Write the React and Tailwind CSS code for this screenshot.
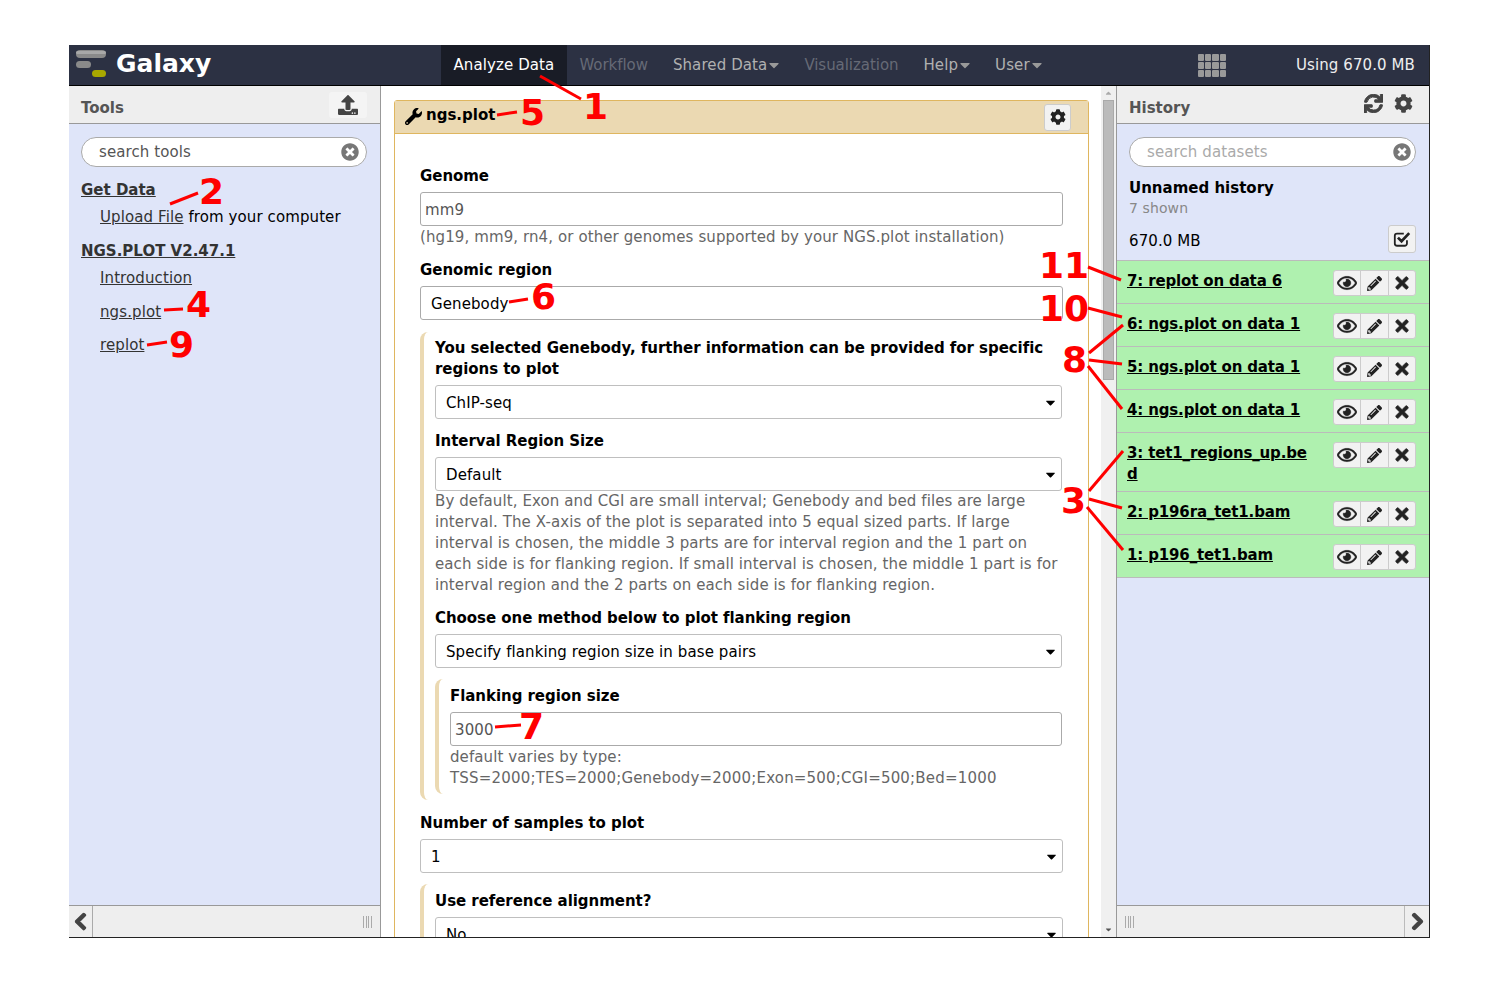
import {
  FaCaretDown,
  FaChevronLeft,
  FaChevronRight,
  FaCog,
  FaPencilAlt,
  FaRegEye,
  FaSync,
  FaTimes,
  FaTimesCircle,
  FaUpload,
  FaWrench,
} from "react-icons/fa";

const navItems = [
  { label: "Analyze Data", active: true },
  { label: "Workflow", disabled: true },
  { label: "Shared Data", caret: true },
  { label: "Visualization", disabled: true },
  { label: "Help", caret: true },
  { label: "User", caret: true },
];

const datasets = [
  { title: "7: replot on data 6" },
  { title: "6: ngs.plot on data 1" },
  { title: "5: ngs.plot on data 1" },
  { title: "4: ngs.plot on data 1" },
  { title: "3: tet1_regions_up.bed" },
  { title: "2: p196ra_tet1.bam" },
  { title: "1: p196_tet1.bam" },
];

// red callouts drawn on top of the screenshot
const callouts = [
  { n: "1", x: 583, y: 119, lines: [[540, 76, 581, 99]] },
  { n: "2", x: 199, y: 204, lines: [[170, 204, 198, 193]] },
  { n: "3", x: 1061, y: 513, lines: [[1089, 491, 1123, 451], [1089, 499, 1122, 508], [1087, 507, 1123, 550]] },
  { n: "4", x: 186, y: 317, lines: [[164, 310, 183, 309]] },
  { n: "5", x: 520, y: 125, lines: [[497, 115, 517, 112]] },
  { n: "6", x: 531, y: 309, lines: [[509, 302, 528, 299]] },
  { n: "7", x: 519, y: 739, lines: [[495, 727, 521, 725]] },
  { n: "8", x: 1062, y: 372, lines: [[1089, 353, 1123, 325], [1089, 360, 1122, 364], [1088, 366, 1122, 409]] },
  { n: "9", x: 169, y: 357, lines: [[147, 345, 167, 342]] },
  { n: "10", x: 1039, y: 321, lines: [[1088, 308, 1122, 317]] },
  { n: "11", x: 1039, y: 278, lines: [[1088, 267, 1121, 280]] },
];

const gridCells = [0, 1, 2, 3, 4, 5, 6, 7, 8, 9, 10, 11];

const Logo = () => (
  <svg width="34" height="30" viewBox="0 0 34 30" className="shrink-0">
    <rect x="1" y="0" width="30" height="8" rx="4" fill="#8a8a8a" />
    <rect x="1" y="1" width="30" height="3" rx="1.5" fill="#a8a8a8" />
    <rect x="1" y="11" width="15" height="7" rx="3.5" fill="#8a8a8a" />
    <rect x="17" y="20" width="14" height="7" rx="3.5" fill="#a8a800" />
  </svg>
);

// fa4 check-square-o, the fa5 one in react-icons is a closed box
const CheckSquare = () => (
  <svg width="18" height="18" viewBox="0 0 20 20" fill="none" stroke="#222222">
    <path d="M15.5 11.5v3.5a2.5 2.5 0 0 1-2.5 2.5H4.5A2.5 2.5 0 0 1 2 15V6.5A2.5 2.5 0 0 1 4.5 4H12" strokeWidth="2" />
    <path d="M5.5 8.5l4 4L18 3.5" strokeWidth="3" />
  </svg>
);

const Search = ({ placeholder, muted }) => (
  <div className={`flex h-[30px] items-center justify-between rounded-full border border-[#aaaaaa] bg-white pl-[17px] ${muted ? "pr-[4px]" : "pr-[7px]"}`}>
    <span className={muted ? "text-[#aaaaaa]" : "text-[#555555]"}>{placeholder}</span>
    <FaTimesCircle className="text-[18px] text-[#777777]" />
  </div>
);

const SelectBox = ({ value }) => (
  <div className="flex h-[34px] items-center justify-between rounded-[3px] border border-[#bfbfbf] bg-white pl-[10px] pr-[3px] text-black">
    <span className="translate-y-px">{value}</span>
    <FaCaretDown className="text-[15px]" />
  </div>
);

const TextBox = ({ value }) => (
  <div className="flex h-[34px] items-center rounded-[3px] border border-[#aaaaaa] bg-white pl-[4px] text-[#555555]">
    <span className="translate-y-px">{value}</span>
  </div>
);

const Label = ({ children, className = "" }) => (
  <div className={`translate-y-px font-bold tracking-[-0.05px] text-black ${className}`}>{children}</div>
);

const Help = ({ children, className = "" }) => (
  <div className={`translate-y-px text-[#666666] ${className}`}>{children}</div>
);

const Grip = () => (
  <div className="flex h-3 w-[9px] justify-between">
    <div className="w-px bg-[#aaaaaa]" />
    <div className="w-px bg-[#aaaaaa]" />
    <div className="w-px bg-[#aaaaaa]" />
    <div className="w-px bg-[#aaaaaa]" />
  </div>
);

const DatasetRow = ({ title }) => (
  <div className="flex justify-between border-t border-[#bbbbbb] bg-[#aff1af] pb-[7px] pl-[10px] pr-[13px] pt-[9px]">
    <div className="w-[189px] translate-y-px break-all font-bold leading-[21px] tracking-[-0.15px] text-black underline">{title}</div>
    <div className="flex h-[26px] w-[83px] shrink-0 rounded-[3px] border border-[#cccccc] bg-[#f2f2f2] text-[#222222]">
      <div className="flex flex-1 items-center justify-center border-r border-[#cccccc]">
        <FaRegEye className="stroke-[10px] text-[20px]" />
      </div>
      <div className="flex flex-1 items-center justify-center border-r border-[#cccccc]">
        <FaPencilAlt className="text-[15px]" />
      </div>
      <div className="flex flex-1 items-center justify-center">
        <FaTimes className="stroke-[25px] text-[18px]" />
      </div>
    </div>
  </div>
);

const Masthead = () => (
  <div className="flex h-[41px] shrink-0 items-center border-b border-black bg-[#2c3143]">
    <div className="flex w-[372px] shrink-0 items-center gap-[7px] pl-[6px]">
      <Logo />
      <span className="-mt-[3px] text-[25px] font-bold tracking-normal text-white">Galaxy</span>
    </div>
    <div className="flex h-full items-stretch">
      {navItems.map((item) => (
        <div
          key={item.label}
          className={`flex items-center px-[12.5px] ${item.active ? "bg-[#191c26] text-white" : ""} ${
            item.disabled ? "tracking-[-0.05px] text-[#666a76]" : ""
          } ${!item.active && !item.disabled ? "text-[#b0b0b0]" : ""}`}
        >
          {item.label}
          {item.caret ? <FaCaretDown className="-ml-[1px] -mr-[3px] text-[16px] text-[#999999]" /> : null}
        </div>
      ))}
    </div>
    <div className="flex flex-1 items-center justify-end">
      <div className="mr-[70px] grid grid-cols-4 gap-px">
        {gridCells.map((c) => (
          <div key={c} className="h-[7px] w-[6.25px] rounded-[1px] bg-[#999999]" />
        ))}
      </div>
      <span className="pr-[14px] text-[#eeeeee]">Using 670.0 MB</span>
    </div>
  </div>
);

const ToolPanel = () => (
  <div className="flex w-[312px] shrink-0 flex-col border-r border-[#999999] bg-[#dfe5f9]">
    <div className="flex h-[38px] shrink-0 items-center justify-between border-b border-[#999999] bg-[#eeeeee] pl-[12px] pr-[13px]">
      <span className="pt-[8px] font-bold tracking-normal text-[#555555]">Tools</span>
      <div className="flex h-[26px] w-[38px] items-center justify-center rounded-[3px] bg-[#f4f4f4]">
        <FaUpload className="text-[20px] text-[#444444]" />
      </div>
    </div>
    <div className="flex-1 pl-[12px] pr-[13px] pt-[13px]">
      <Search placeholder="search tools" />
      <div className="translate-y-px">
        <div className="mt-[12px] font-bold tracking-normal text-[#333333] underline">Get Data</div>
        <div className="ml-[19px] mt-[6px] text-black">
          <span className="text-[#333333] underline">Upload File</span> from your computer
        </div>
        <div className="mt-[13px] font-bold tracking-normal text-[#333333] underline">NGS.PLOT V2.47.1</div>
        <div className="ml-[19px] mt-[6px] text-[#333333] underline">Introduction</div>
        <div className="ml-[19px] mt-[13px] text-[#333333] underline">ngs.plot</div>
        <div className="ml-[19px] mt-[12px] text-[#333333] underline">replot</div>
      </div>
    </div>
    <div className="flex h-[32px] shrink-0 items-stretch border-t border-[#999999] bg-[#eeeeee]">
      <div className="flex w-[24px] items-center justify-center border-r border-[#aaaaaa]">
        <FaChevronLeft className="stroke-[40px] text-[19px] text-[#444444]" />
      </div>
      <div className="flex flex-1 items-center justify-end pr-[8px]">
        <Grip />
      </div>
    </div>
  </div>
);

const ToolForm = () => (
  <div className="flex min-w-0 flex-1">
    <div className="min-w-0 flex-1 overflow-hidden pl-[13px] pr-[12px] pt-[14px]">
      <div className="rounded-t-[3px] border border-[#dfb65f] pb-[60px]">
        <div className="flex h-[33px] items-center justify-between border-b border-[#dfb65f] bg-[#ebd9b2] pl-[10px] pr-[17px]">
          <div className="-mt-[3px] flex items-center gap-[4px] font-bold tracking-normal text-black">
            <FaWrench className="mt-[1px] text-[17px]" />
            <span>ngs.plot</span>
          </div>
          <div className="flex h-[27px] w-[27px] items-center justify-center rounded-[3px] border border-[#cccccc] bg-[#f2f2f2]">
            <FaCog className="text-[16px] text-[#222222]" />
          </div>
        </div>
        <div className="px-[25px] pt-[31px] text-[#333333]">
          <Label className="mb-[6px]">Genome</Label>
          <TextBox value="mm9" />
          <Help>(hg19, mm9, rn4, or other genomes supported by your NGS.plot installation)</Help>
          <Label className="mb-[6px] mt-[12px]">Genomic region</Label>
          <div className="flex h-[34px] items-center rounded-[3px] border border-[#aaaaaa] bg-white pl-[10px] text-black">
            <span className="translate-y-px">Genebody</span>
          </div>

          <div className="mt-[12px] rounded-l-[8px] border-l-[4px] border-[#ebd9b2] pb-[6px] pl-[11px] pr-[1px] pt-[5px]">
            <Label className="mb-[6px]">
              You selected Genebody, further information can be provided for specific regions to plot
            </Label>
            <SelectBox value="ChIP-seq" />
            <Label className="mb-[6px] mt-[11px]">Interval Region Size</Label>
            <SelectBox value="Default" />
            <div className="-mt-px">
              <Help>
                By default, Exon and CGI are small interval; Genebody and bed files are large interval. The
                X-axis of the plot is separated into 5 equal sized parts. If large interval is chosen, the
                middle 3 parts are for interval region and the 1 part on each side is for flanking region. If
                small interval is chosen, the middle 1 part is for interval region and the 2 parts on each
                side is for flanking region.
              </Help>
            </div>
            <Label className="mb-[6px] mt-[12px]">Choose one method below to plot flanking region</Label>
            <SelectBox value="Specify flanking region size in base pairs" />

            <div className="mt-[11px] rounded-l-[8px] border-l-[4px] border-[#ebd9b2] pb-[6px] pl-[11px] pt-[6px]">
              <Label className="mb-[6px]">Flanking region size</Label>
              <TextBox value="3000" />
              <Help>default varies by type:</Help>
              <Help className="tracking-[0.19px]">TSS=2000;TES=2000;Genebody=2000;Exon=500;CGI=500;Bed=1000</Help>
            </div>
          </div>

          <Label className="mb-[6px] mt-[12px]">Number of samples to plot</Label>
          <SelectBox value="1" />
          <div className="mt-[11px] rounded-l-[8px] border-l-[4px] border-[#ebd9b2] pl-[11px] pt-[6px]">
            <Label className="mb-[6px]">Use reference alignment?</Label>
            <SelectBox value="No" />
          </div>
        </div>
      </div>
    </div>
    <div className="flex w-[15px] shrink-0 flex-col items-center bg-[#f0f0f0]">
      <FaCaretDown className="mt-[3px] h-[9px] rotate-180 text-[11px] text-[#aaaaaa]" />
      <div className="mt-[2px] h-[280px] w-[11px] border border-[#aaaaaa] bg-[#bbbbbb]" />
      <FaCaretDown className="mb-[3px] mt-auto h-[9px] text-[11px] text-[#555555]" />
    </div>
  </div>
);

const HistoryPanel = () => (
  <div className="flex w-[313px] shrink-0 flex-col border-l border-[#999999] bg-[#dfe5f9]">
    <div className="flex h-[38px] shrink-0 items-center justify-between border-b border-[#999999] bg-[#eeeeee] pl-[12px] pr-[16px]">
      <span className="pt-[8px] font-bold tracking-normal text-[#555555]">History</span>
      <div className="-mt-[3px] flex items-center gap-[11px] text-[19px] text-[#444444]">
        <FaSync className="stroke-[25px]" />
        <FaCog />
      </div>
    </div>
    <div className="flex-1">
      <div className="pl-[12px] pr-[13px] pt-[13px]">
        <Search placeholder="search datasets" muted />
        <div className="mt-[10px] translate-y-px font-bold tracking-normal text-black">Unnamed history</div>
        <div className="text-[14px] leading-[21px] text-[#888888]">7 shown</div>
        <div className="mt-[6px] flex h-[28px] items-center justify-between text-black">
          <span className="pt-[4px]">670.0 MB</span>
          <div className="flex h-[28px] w-[28px] items-center justify-center rounded-[3px] border border-[#cccccc] bg-[#f2f2f2]">
            <CheckSquare />
          </div>
        </div>
        <div className="h-[7px]" />
      </div>
      {datasets.map((d) => (
        <DatasetRow key={d.title} title={d.title} />
      ))}
      <div className="h-px bg-[#bbbbbb]" />
    </div>
    <div className="flex h-[32px] shrink-0 items-stretch border-t border-[#999999] bg-[#eeeeee]">
      <div className="flex flex-1 items-center pl-[8px]">
        <Grip />
      </div>
      <div className="flex w-[25px] items-center justify-center border-l border-[#bbbbbb]">
        <FaChevronRight className="stroke-[40px] text-[19px] text-[#444444]" />
      </div>
    </div>
  </div>
);

export default function App() {
  return (
    <div className="relative h-[984px] w-[1500px] overflow-hidden bg-white pl-[69px] pt-[45px] font-['DejaVu_Sans',sans-serif] text-[15px] leading-[21px] tracking-[0.1px]">
      <div className="flex h-[893px] w-[1361px] flex-col border-b border-r border-[#222222]">
        <Masthead />
        <div className="flex min-h-0 flex-1">
          <ToolPanel />
          <ToolForm />
          <HistoryPanel />
        </div>
      </div>
      <svg width="1500" height="984" className="pointer-events-none absolute left-0 top-0">
        {callouts.map((c) => (
          <g key={c.n}>
            {c.lines.map((l, i) => (
              <line key={i} x1={l[0]} y1={l[1]} x2={l[2]} y2={l[3]} stroke="#ff0000" strokeWidth="3" />
            ))}
            <text x={c.x} y={c.y} fill="#ff0000" fontSize="36" fontWeight="700" letterSpacing="0" fontFamily="'DejaVu Sans', sans-serif">
              {c.n}
            </text>
          </g>
        ))}
      </svg>
    </div>
  );
}
